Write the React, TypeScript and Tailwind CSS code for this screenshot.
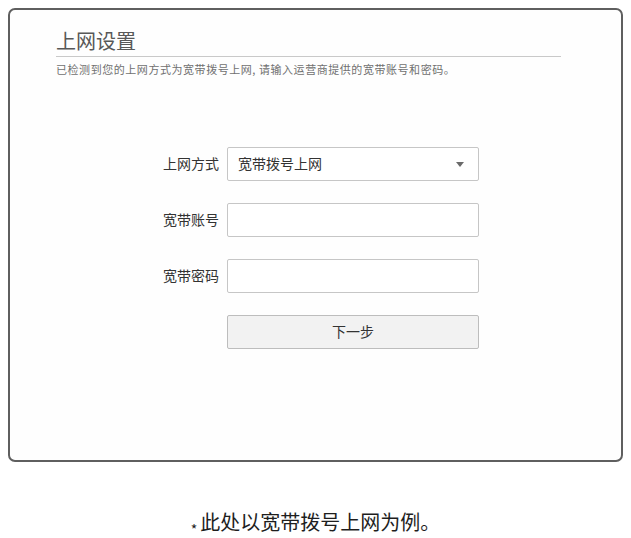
import React from "react";

function Row({ label, children }: { label: string; children: React.ReactNode }) {
	return (
		<div className="flex items-center">
			<div className="w-[72px] pr-[8px] text-right text-[14px] leading-[20px] text-[#333] whitespace-nowrap -mt-[3px]">
				{label}
			</div>
			{children}
		</div>
	);
}

export default function App() {
	return (
		<div
			className="w-[631px] h-[538px] bg-white px-[8px] pt-[8px]"
			style={{ fontFamily: '"Noto Sans CJK SC", "Noto Sans", sans-serif' }}
		>
			{/* panel */}
			<div className="h-[454px] border-2 border-[#5f5f5f] rounded-[7px] bg-[#fefefe] pl-[46px] pt-[18px]">
				<div className="w-[505px] border-b border-[#c9c9c9] h-[29px] text-[20px] leading-[26px] text-[#585858]">
					上网设置
				</div>
				<p className="mt-[5px] text-[11px] leading-[14px] text-[#707070] tracking-[0.55px]">
					已检测到您的上网方式为宽带拨号上网, 请输入运营商提供的宽带账号和密码。
				</p>

				{/* form */}
				<div className="mt-[71px] ml-[99px] flex flex-col gap-[22px]">
					<Row label="上网方式">
						<div className="w-[252px] h-[34px] border border-[#c6c6c6] rounded-[2px] bg-white flex items-center justify-between pl-[10px] pr-[14px] text-[14px] text-[#333]">
							<span className="-mt-[2px]">宽带拨号上网</span>
							<svg width="8" height="5" viewBox="0 0 8 5">
								<path d="M0 0 L8 0 L4 5 Z" fill="#6a6a6a" />
							</svg>
						</div>
					</Row>
					<Row label="宽带账号">
						<div className="w-[252px] h-[34px] border border-[#c6c6c6] rounded-[2px] bg-white" />
					</Row>
					<Row label="宽带密码">
						<div className="w-[252px] h-[34px] border border-[#c6c6c6] rounded-[2px] bg-white" />
					</Row>
					<Row label="">
						<div className="w-[252px] h-[34px] border border-[#bdbdbd] rounded-[2px] bg-[#f2f2f2] flex items-center justify-center text-[14px] text-[#333]">
							<span className="-mt-[2px]">下一步</span>
						</div>
					</Row>
				</div>
			</div>

			{/* footnote */}
			<div className="mt-[46px] flex items-baseline justify-center text-[20px] leading-[28px] text-[#1e1e1e]">
				<span className="text-[14px] leading-[20px] mr-[3px] translate-y-[5px]">*</span>
				<span>此处以宽带拨号上网为例。</span>
			</div>
		</div>
	);
}
